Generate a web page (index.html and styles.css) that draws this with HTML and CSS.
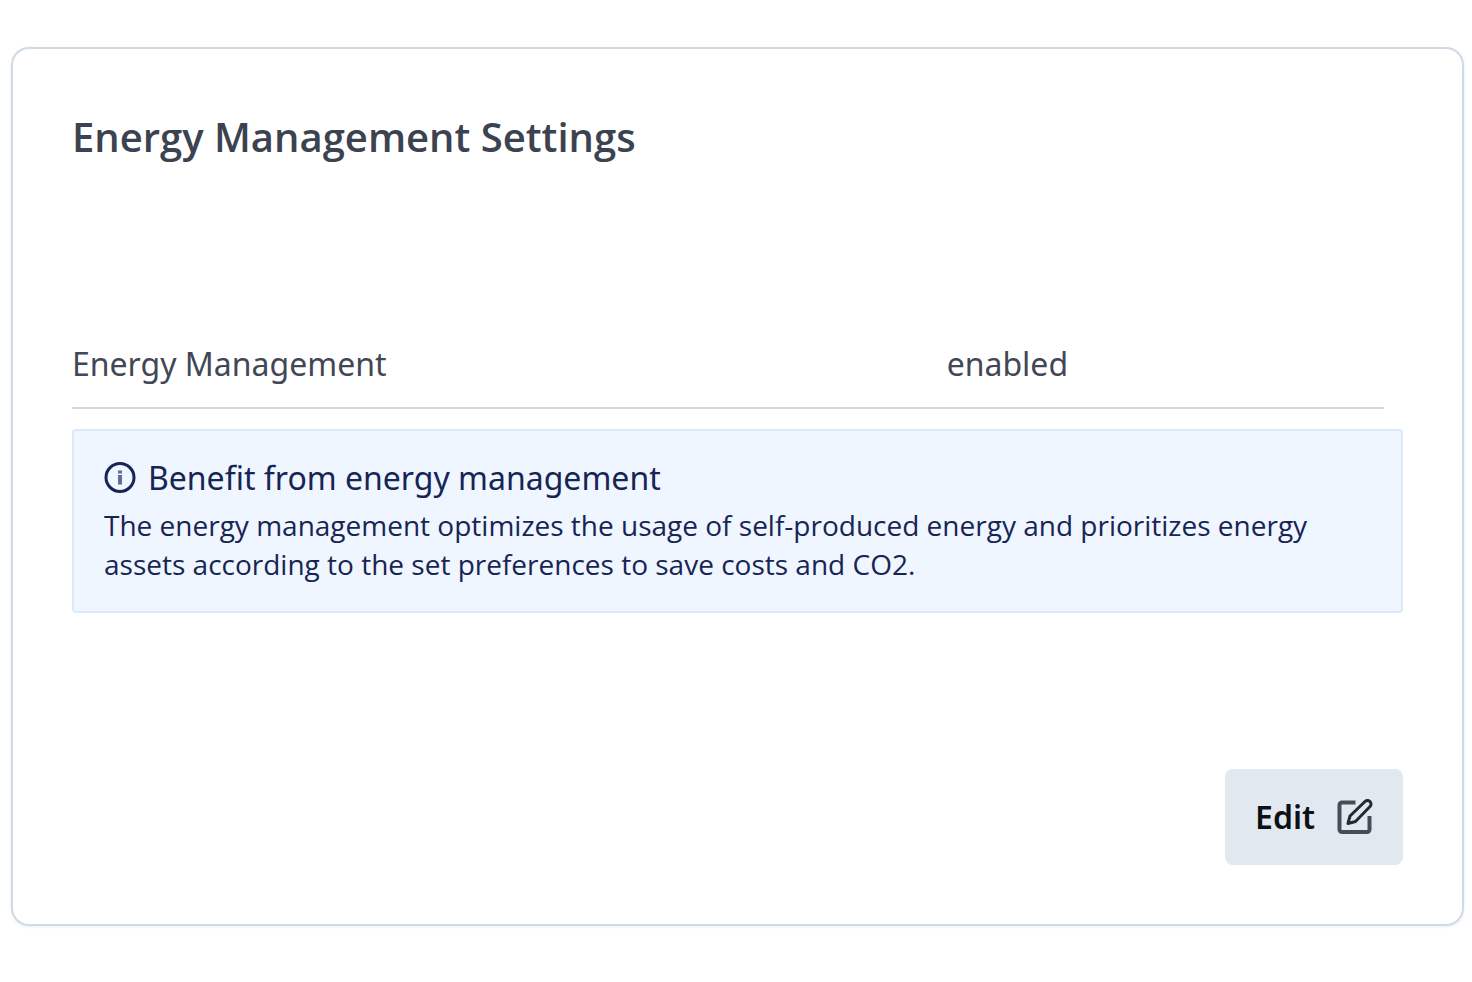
FILE: index.html
```html
<!DOCTYPE html>
<html lang="en">
<head>
<meta charset="utf-8">
<meta name="viewport" content="width=device-width, initial-scale=1">
<title>Energy Management Settings</title>
<link rel="stylesheet" href="styles.css">
</head>
<body>
<main class="card">
  <h1 class="title">Energy Management Settings</h1>
  <dl class="setting">
    <dt>Energy Management</dt>
    <dd>enabled</dd>
  </dl>
  <section class="notice">
    <h2 class="notice-title">
      <svg class="info-icon" viewBox="0 0 32 32" aria-hidden="true"><circle cx="16" cy="15.500" r="14"/><path class="stem" d="M16 13v9.500M16 8.500v3"/></svg>
      Benefit from energy management
    </h2>
    <p class="notice-text">The energy management optimizes the usage of self-produced energy and prioritizes energy assets according to the set preferences to save costs and CO2.</p>
  </section>
  <footer class="actions">
    <button class="edit" type="button">Edit
      <svg class="edit-icon" viewBox="0 0 36 36" aria-hidden="true"><path class="frame" d="M18.500 3.500H5a2.500 2.500 0 0 0-2.500 2.500V30.500a2.500 2.500 0 0 0 2.500 2.500h25a2.500 2.500 0 0 0 2.500-2.500V17"/><path class="pencil" d="M11 24.500l2-7.500L28 2.500a3.400 3.400 0 0 1 5 5L18.500 22.500z"/></svg>
    </button>
  </footer>
</main>
</body>
</html>
```
FILE: styles.css
```css
* { box-sizing: border-box; }
body {
  margin: 0;
  padding: 47px 8px 55px 11px;
  background: #fff;
  color: #424756;
  font-family: "Noto Sans", "Open Sans", sans-serif;
}
.card {
  padding: 60px 59px 59px;
  border: 2px solid #d0dae5;
  border-radius: 18px;
  box-shadow: 0 1px 3px rgba(148, 163, 184, 0.2);
}
.title {
  margin: 0;
  color: #3b4250;
  font-family: "Open Sans", "Noto Sans", sans-serif;
  font-size: 40px;
  line-height: 56px;
  font-weight: 600;
}
.setting {
  display: grid;
  grid-template-columns: 2fr 1fr;
  margin: 173px 19px 20px 0;
  padding-bottom: 17px;
  border-bottom: 2px solid #d0d8e0;
  font-size: 32px;
  line-height: 52px;
}
.setting dd { margin: 0; }
.notice {
  padding: 23px 30px 27px;
  border: 2px solid #dbeafa;
  border-radius: 4px;
  background: #eff6ff;
  color: #172554;
}
.notice-title {
  display: flex;
  align-items: center;
  gap: 12px;
  margin: 0;
  font-size: 32px;
  line-height: 48px;
  font-weight: 400;
}
.notice-text {
  margin: 4px 0 0;
  font-family: "Open Sans", "Noto Sans", sans-serif;
  font-size: 28px;
  line-height: 39px;
}
.info-icon { width: 32px; height: 32px; fill: none; stroke: currentColor; stroke-width: 3; }
.info-icon .stem { stroke: #626d94; stroke-width: 4; }
.actions { display: flex; justify-content: flex-end; margin-top: 156px; }
.edit {
  display: flex;
  align-items: center;
  gap: 22px;
  padding: 24px 30px;
  border: 0;
  border-radius: 8px;
  background: #e2e8f0;
  color: #0d1117;
  font-family: inherit;
  font-size: 32px;
  line-height: 48px;
  font-weight: 600;
}
.edit-icon { width: 36px; height: 36px; fill: none; stroke-linejoin: round; }
.edit-icon .frame { stroke: #454c56; stroke-width: 4; }
.edit-icon .pencil { stroke: #242a32; stroke-width: 3; }
```
